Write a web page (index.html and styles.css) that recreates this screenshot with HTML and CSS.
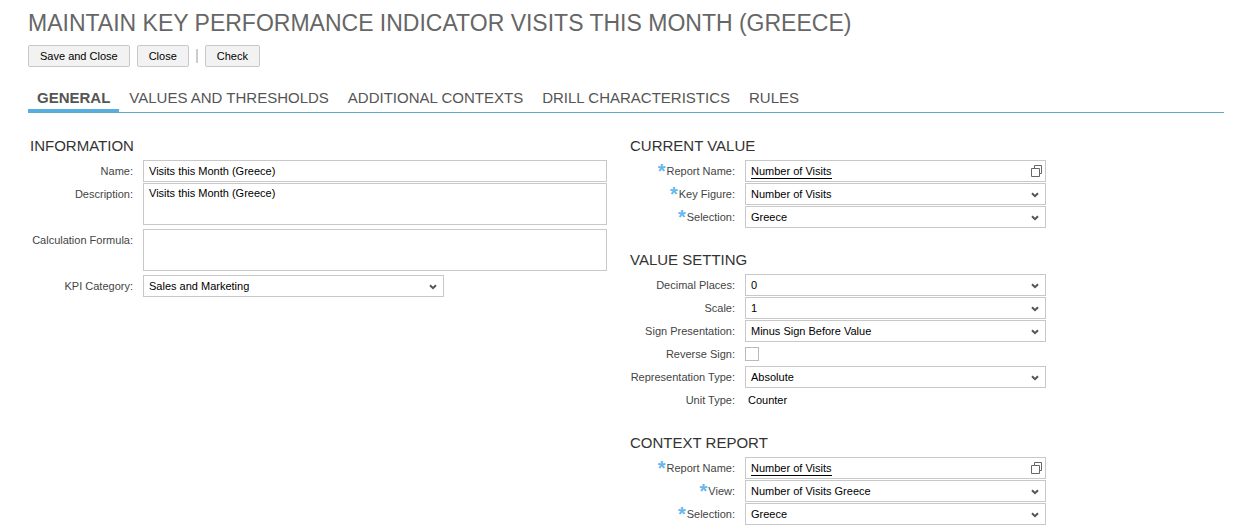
FILE: index.html
```html
<!DOCTYPE html>
<html lang="en">

<head>
  <meta charset="utf-8">
  <title>Maintain Key Performance Indicator</title>
  <link rel="stylesheet" href="styles.css">
</head>

<body>
  <svg class="symbols" aria-hidden="true">
    <symbol id="arrow" viewBox="0 0 8 6">
      <path d="M1 1.2 L4 4.2 L7 1.2" fill="none" stroke="#555" stroke-width="2" />
    </symbol>
    <symbol id="windows" viewBox="0 0 11 12">
      <path d="M3.5 3.5 V0.5 H10.5 V8.5 H8.5 M0.5 3.5 H8.5 V11.5 H0.5 Z" fill="none" stroke="#666" />
    </symbol>
  </svg>

  <h1 class="title">MAINTAIN KEY PERFORMANCE INDICATOR VISITS THIS MONTH (GREECE)</h1>

  <div class="toolbar">
    <button type="button">Save and Close</button>
    <button type="button">Close</button>
    <span class="separator"></span>
    <button type="button">Check</button>
  </div>

  <nav class="tabs">
    <a class="active" href="#general">GENERAL</a>
    <a href="#values">VALUES AND THRESHOLDS</a>
    <a href="#contexts">ADDITIONAL CONTEXTS</a>
    <a href="#drill">DRILL CHARACTERISTICS</a>
    <a href="#rules">RULES</a>
  </nav>

  <form class="columns" id="general">
    <div class="left">
      <section class="group">
        <h2>INFORMATION</h2>
        <div class="row">
          <label for="name">Name:</label>
          <input class="box" type="text" id="name" value="Visits this Month (Greece)">
        </div>
        <div class="row">
          <label for="description">Description:</label>
          <textarea class="box" id="description">Visits this Month (Greece)</textarea>
        </div>
        <div class="row">
          <label for="formula">Calculation Formula:</label>
          <textarea class="box" id="formula"></textarea>
        </div>
        <div class="row">
          <label for="category">KPI Category:</label>
          <div class="dropdown short">
            <select class="box" id="category"><option>Sales and Marketing</option></select>
            <svg class="arrow"><use href="#arrow" /></svg>
          </div>
        </div>
      </section>
    </div>

    <div class="right">
      <section class="group">
        <h2>CURRENT VALUE</h2>
        <div class="row">
          <span class="label required">Report Name:</span>
          <div class="box lookup">
            <a href="#report">Number of Visits</a>
            <button type="button" aria-label="Select report"><svg><use href="#windows" /></svg></button>
          </div>
        </div>
        <div class="row">
          <label class="required" for="key-figure">Key Figure:</label>
          <div class="dropdown">
            <select class="box" id="key-figure"><option>Number of Visits</option></select>
            <svg class="arrow"><use href="#arrow" /></svg>
          </div>
        </div>
        <div class="row">
          <label class="required" for="selection">Selection:</label>
          <div class="dropdown">
            <select class="box" id="selection"><option>Greece</option></select>
            <svg class="arrow"><use href="#arrow" /></svg>
          </div>
        </div>
      </section>

      <section class="group">
        <h2>VALUE SETTING</h2>
        <div class="row">
          <label for="decimals">Decimal Places:</label>
          <div class="dropdown">
            <select class="box" id="decimals"><option>0</option></select>
            <svg class="arrow"><use href="#arrow" /></svg>
          </div>
        </div>
        <div class="row">
          <label for="scale">Scale:</label>
          <div class="dropdown">
            <select class="box" id="scale"><option>1</option></select>
            <svg class="arrow"><use href="#arrow" /></svg>
          </div>
        </div>
        <div class="row">
          <label for="sign">Sign Presentation:</label>
          <div class="dropdown">
            <select class="box" id="sign"><option>Minus Sign Before Value</option></select>
            <svg class="arrow"><use href="#arrow" /></svg>
          </div>
        </div>
        <div class="row">
          <label for="reverse">Reverse Sign:</label>
          <input class="check" type="checkbox" id="reverse">
        </div>
        <div class="row">
          <label for="representation">Representation Type:</label>
          <div class="dropdown">
            <select class="box" id="representation"><option>Absolute</option></select>
            <svg class="arrow"><use href="#arrow" /></svg>
          </div>
        </div>
        <div class="row">
          <span class="label">Unit Type:</span>
          <span class="value">Counter</span>
        </div>
      </section>

      <section class="group">
        <h2>CONTEXT REPORT</h2>
        <div class="row">
          <span class="label required">Report Name:</span>
          <div class="box lookup">
            <a href="#context-report">Number of Visits</a>
            <button type="button" aria-label="Select context report"><svg><use href="#windows" /></svg></button>
          </div>
        </div>
        <div class="row">
          <label class="required" for="view">View:</label>
          <div class="dropdown">
            <select class="box" id="view"><option>Number of Visits Greece</option></select>
            <svg class="arrow"><use href="#arrow" /></svg>
          </div>
        </div>
        <div class="row">
          <label class="required" for="context-selection">Selection:</label>
          <div class="dropdown">
            <select class="box" id="context-selection"><option>Greece</option></select>
            <svg class="arrow"><use href="#arrow" /></svg>
          </div>
        </div>
      </section>
    </div>
  </form>
</body>

</html>
```
FILE: styles.css
```css
* {
  box-sizing: border-box;
}

body {
  margin: 0;
  padding: 8px 28px 0;
  font-family: "Liberation Sans", Arial, sans-serif;
  font-size: 11px;
  color: #000;
  background: #fff;
}

button,
input,
select,
textarea {
  font: inherit;
  color: inherit;
}

.symbols {
  display: none;
}

.title {
  margin: 0;
  font-size: 23px;
  line-height: 30px;
  font-weight: normal;
  color: #666;
}

.toolbar {
  display: flex;
  align-items: center;
  gap: 7px;
  margin-top: 7px;
}

.toolbar button {
  height: 22px;
  padding: 0 11px;
  border: 1px solid #c8c8c8;
  border-radius: 2px;
  background: #f2f2f2;
}

.separator {
  width: 2px;
  height: 14px;
  background: #ccc;
}

/* Tabs */
.tabs {
  display: flex;
  gap: 1px;
  margin-top: 17px;
  border-bottom: 1px solid #5fa9cc;
}

.tabs a {
  height: 28px;
  padding: 0 9px;
  border-bottom: 3px solid transparent;
  font-size: 15px;
  line-height: 28px;
  color: #555;
  text-decoration: none;
}

.tabs .active {
  border-bottom-color: #56afe0;
  font-weight: bold;
}

/* Form */
.columns {
  display: grid;
  grid-template-columns: 1fr 1fr;
  margin-top: 22px;
}

.left {
  padding-right: 19px;
}

.right {
  max-width: 420px;
}

.group {
  margin-bottom: 20px;
}

.group h2 {
  margin: 0 0 4px;
  padding-left: 2px;
  font-size: 15px;
  line-height: 21px;
  font-weight: normal;
  color: #333;
}

.right h2 {
  padding-left: 4px;
}

.row {
  display: flex;
  gap: 10px;
  min-height: 23px;
}

.row label,
.row .label {
  flex: none;
  width: 105px;
  line-height: 22px;
  color: #444;
  text-align: right;
  white-space: nowrap;
}

.right .row label,
.right .row .label {
  width: 109px;
}

.required::before {
  content: "*";
  margin-right: 1px;
  font-size: 20px;
  font-weight: bold;
  line-height: 1px;
  vertical-align: -3px;
  color: #64b8ee;
}

.box {
  display: block;
  flex: 1;
  min-width: 0;
  width: 100%;
  height: 22px;
  margin: 0;
  padding: 0 5px;
  border: 1px solid #c8c8c8;
  border-radius: 0;
  background: #fff;
  appearance: none;
}

textarea.box {
  height: 42px;
  margin-bottom: 4px;
  padding-top: 3px;
  resize: none;
}

.dropdown {
  position: relative;
  flex: 1;
}

.short {
  max-width: 301px;
}

.arrow {
  position: absolute;
  top: 9px;
  right: 7px;
  width: 8px;
  height: 6px;
  pointer-events: none;
}

.lookup {
  display: flex;
  align-items: center;
  justify-content: space-between;
  padding-right: 3px;
}

.lookup a {
  color: #000;
  line-height: 14px;
  border-bottom: 1px solid #000;
  text-decoration: none;
}

.lookup button {
  padding: 0;
  border: 0;
  background: none;
}

.lookup svg {
  display: block;
  width: 11px;
  height: 12px;
}

.check {
  width: 14px;
  height: 14px;
  margin: 4px 0 0;
  border: 1px solid #bbb;
  background: #fff;
  appearance: none;
}

.check:checked {
  background: #56b0ea;
}

.value {
  padding-left: 3px;
  line-height: 22px;
}
```
